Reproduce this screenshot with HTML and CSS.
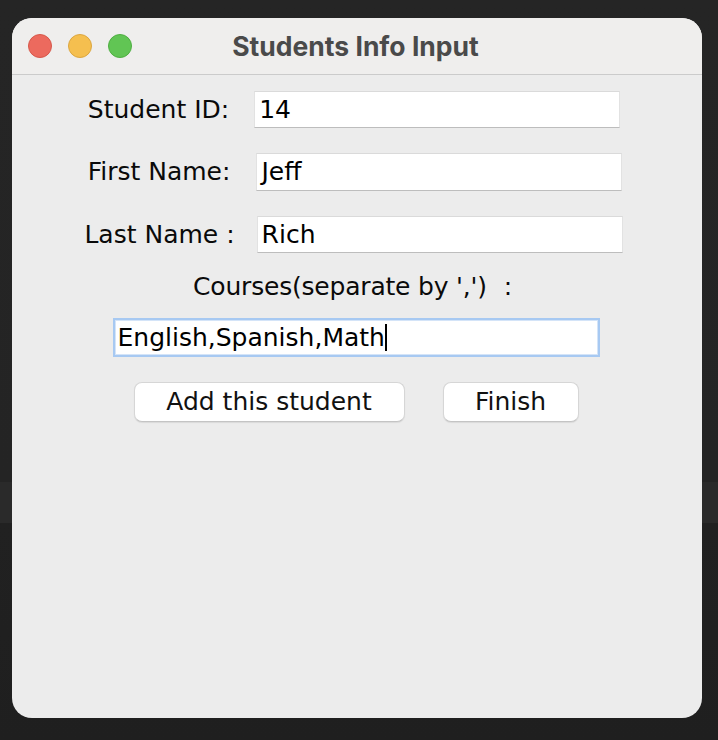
FILE: index.html
```html
<!DOCTYPE html>
<html>
<head>
<meta charset="utf-8">
<link rel="stylesheet" href="styles.css">
</head>
<body>
<div class="window">
  <div class="titlebar">
    <div class="lights">
      <span class="light red"></span>
      <span class="light yellow"></span>
      <span class="light green"></span>
    </div>
    <div class="title">Students Info Input</div>
    <div class="spacer"></div>
  </div>
  <div class="content">
    <div class="row row1">
      <span class="label">Student ID:</span>
      <div class="field f1">14</div>
    </div>
    <div class="row row2">
      <span class="label">First Name:</span>
      <div class="field f2">Jeff</div>
    </div>
    <div class="row row3">
      <span class="label">Last Name :</span>
      <div class="field f3">Rich</div>
    </div>
    <div class="courses-label">Courses(separate by ',')<span class="colon">:</span></div>
    <div class="row">
      <div class="field focus">English,Spanish,Math<span class="caret"></span></div>
    </div>
    <div class="row buttons">
      <button class="btn add">Add this student</button>
      <button class="btn finish">Finish</button>
    </div>
  </div>
</div>
</body>
</html>
```
FILE: styles.css
```css
* { box-sizing: border-box; }
html, body { margin: 0; padding: 0; }
body {
  width: 718px;
  height: 740px;
  overflow: hidden;
  background: linear-gradient(to bottom, #252525 0, #242424 482px, #2a2a2a 482px, #2a2a2a 523px, #212121 523px, #1f1f1f 740px);
  padding: 18px 16px 0 12px;
  font-family: "DejaVu Sans", "Liberation Sans", sans-serif;
}
.window {
  width: 690px;
  height: 700px;
  background: #ececec;
  border-radius: 20px;
  overflow: hidden;
}
.titlebar {
  height: 57px;
  background: #efeeed;
  border-bottom: 1px solid #cbcbcb;
  display: grid;
  grid-template-columns: 1fr auto 1fr;
  align-items: center;
}
.lights {
  display: flex;
  gap: 16px;
  padding-left: 16px;
}
.light {
  width: 24px;
  height: 24px;
  border-radius: 50%;
  display: block;
}
.red { background: #ec6a5e; border: 1px solid #d6584b; }
.yellow { background: #f5bf4f; border: 1px solid #dba640; }
.green { background: #61c554; border: 1px solid #4fae42; }
.title {
  font-family: Inter, "DejaVu Sans", sans-serif;
  font-weight: 700;
  font-size: 26.5px;
  color: #4a4a4a;
  padding-right: 3px;
  margin-top: -1px;
}
.content {
  display: flex;
  flex-direction: column;
  align-items: center;
  padding-top: 16px;
  font-size: 25px;
  line-height: 30px;
  color: #0a0a0a;
}
.row {
  display: flex;
  align-items: center;
  justify-content: center;
}
.row1 { gap: 25px; margin-bottom: 25px; margin-right: 6px; }
.row2 { gap: 26px; margin-bottom: 25px; margin-right: 4px; }
.row3 { gap: 22px; margin-right: 7px; }
.field {
  background: #fff;
  width: 366px;
  height: 37px;
  padding: 0 4px;
  display: flex;
  align-items: center;
  border-top: 1px solid #dadada;
  border-left: 1px solid #e2e2e2;
  border-right: 1px solid #e2e2e2;
  border-bottom: 1px solid #bdbdbd;
  color: #000;
}
.f2 { height: 38px; }
.courses-label {
  letter-spacing: -0.2px;
  margin-top: 19px;
  margin-bottom: 16px;
  margin-right: 9px;
}
.colon { margin-left: 17px; }
.field.focus {
  width: 487px;
  height: 39px;
  border: 2px solid #a7c9f2;
  box-shadow: inset 0 0 0 1px #d4e4f8;
  padding: 0 3px;
  margin-left: -2px;
}
.caret {
  display: inline-block;
  width: 2px;
  height: 27px;
  background: #000;
  margin-left: 0;
}
.buttons {
  gap: 38px;
  margin-top: 25px;
  margin-left: -2px;
}
.btn {
  font-family: "DejaVu Sans", "Liberation Sans", sans-serif;
  font-size: 25px;
  line-height: 30px;
  height: 40px;
  background: #fff;
  color: #111;
  border: 1px solid #d6d6d6;
  border-bottom-color: #c4c4c4;
  border-radius: 8px;
  box-shadow: 0 1px 1px rgba(0,0,0,0.08);
  padding: 0;
}
.add { width: 271px; }
.finish { width: 136px; }
```
